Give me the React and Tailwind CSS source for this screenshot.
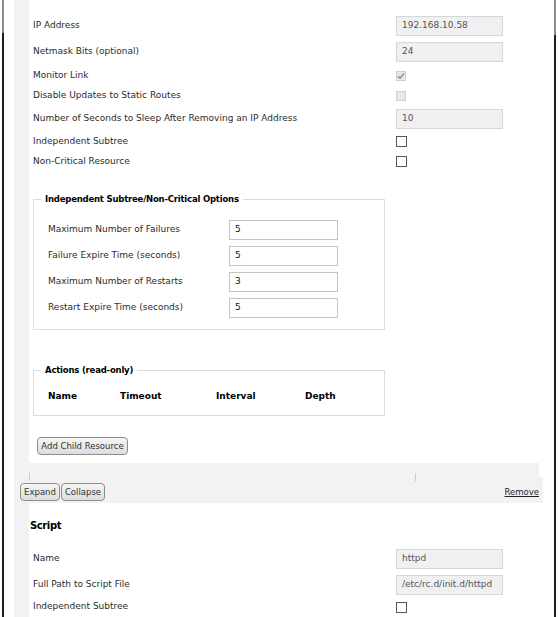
import React from "react";

const font = "font-['DejaVu_Sans',sans-serif]";

const TextBox = ({ value, disabled, className = "" }) => (
  <div
    className={`h-[20px] flex items-center px-[5px] border text-[9px] ${
      disabled
        ? "bg-[#f0f0f0] border-[#d3d8dc] text-[#555]"
        : "bg-white border-[#c4c4c4] text-[#111]"
    } ${className}`}
  >
    {value}
  </div>
);

const CheckBox = ({ checked, disabled }) => {
  if (disabled) {
    return (
      <span className="w-[10px] h-[10px] flex items-center justify-center border border-[#cfcfcf] bg-[#e9e9e9]">
        {checked && (
          <svg width="9" height="8" viewBox="0 0 9 8">
            <path d="M1 4.2 L3.4 6.6 L8 1" fill="none" stroke="#8a8a8a" strokeWidth="1.6" />
          </svg>
        )}
      </span>
    );
  }
  return <span className="w-[11px] h-[11px] border border-[#555] bg-white" />;
};

const FieldRow = ({ label, h, children }) => (
  <div className="flex items-center" style={{ height: h }}>
    <div className="w-[367px] pl-[4px] text-[9px] text-[#2b2b2b]">{label}</div>
    <div className="flex items-center">{children}</div>
  </div>
);

const OptionRow = ({ label, value }) => (
  <div className="flex items-center h-[26px]">
    <div className="w-[181px] text-[9px] text-[#2b2b2b]">{label}</div>
    <TextBox value={value} className="w-[109px]" />
  </div>
);

const Tick = ({ left }) => (
  <div className="flex">
    <div style={{ width: left }} />
    <div className="w-[1px] h-full bg-[#c8c8c8]" />
  </div>
);

const SmallButton = ({ children, className = "" }) => (
  <button
    className={`h-[18px] rounded-[4px] border border-[#8e8e8e] bg-gradient-to-b from-[#f6f6f6] to-[#dcdcdc] text-[8.5px] text-[#333] ${className}`}
  >
    {children}
  </button>
);

export default function App() {
  return (
    <div className={`w-[558px] h-[617px] overflow-hidden bg-white flex ${font}`}>
      {/* outer frame line, left */}
      <div className="w-[2px]" />
      <div className="w-[2px] flex flex-col">
        <div className="h-[33px] bg-[#8c8c8c]" />
        <div className="flex-1 bg-[#1c1c1c]" />
      </div>
      <div className="w-[10px]" />

      <div className="w-[531px] flex flex-col">
        {/* IP resource panel */}
        <div className="h-[463px] shrink-0 flex">
          <div className="w-[15px] bg-[#f2f2f2]" />
          <div className="flex-1 bg-white flex flex-col">
            <div className="pt-[13px]">
              <FieldRow label="IP Address" h={26}>
                <TextBox value="192.168.10.58" disabled className="w-[107px]" />
              </FieldRow>
              <FieldRow label="Netmask Bits (optional)" h={26}>
                <TextBox value="24" disabled className="w-[107px]" />
              </FieldRow>
              <FieldRow label="Monitor Link" h={21}>
                <CheckBox checked disabled />
              </FieldRow>
              <FieldRow label="Disable Updates to Static Routes" h={20}>
                <CheckBox disabled />
              </FieldRow>
              <FieldRow label="Number of Seconds to Sleep After Removing an IP Address" h={25}>
                <TextBox value="10" disabled className="w-[107px]" />
              </FieldRow>
              <FieldRow label="Independent Subtree" h={21}>
                <CheckBox />
              </FieldRow>
              <FieldRow label="Non-Critical Resource" h={19}>
                <CheckBox />
              </FieldRow>
            </div>

            <fieldset className="ml-[4px] mt-[22px] w-[352px] h-[137px] border border-[#dcdcdc]">
              <legend className="ml-[7px] px-[4px] text-[8.5px] tracking-[-0.2px] font-bold text-black">
                Independent Subtree/Non-Critical Options
              </legend>
              <div className="pl-[14px] pt-[11px]">
                <OptionRow label="Maximum Number of Failures" value="5" />
                <OptionRow label="Failure Expire Time (seconds)" value="5" />
                <OptionRow label="Maximum Number of Restarts" value="3" />
                <OptionRow label="Restart Expire Time (seconds)" value="5" />
              </div>
            </fieldset>

            <fieldset className="ml-[4px] mt-[34px] w-[352px] h-[52px] border border-[#dcdcdc]">
              <legend className="ml-[7px] px-[4px] text-[8.5px] tracking-[-0.2px] font-bold text-black">
                Actions (read-only)
              </legend>
              <div className="pl-[14px] flex items-center h-[40px] text-[9px] font-bold text-black">
                <div className="w-[72px]">Name</div>
                <div className="w-[96px]">Timeout</div>
                <div className="w-[89px]">Interval</div>
                <div>Depth</div>
              </div>
            </fieldset>

            <div className="mt-[16px] ml-[8px]">
              <SmallButton className="w-[91px]">Add Child Resource</SmallButton>
            </div>
          </div>
        </div>

        {/* expand / collapse bar */}
        <div className="w-[525px] h-[14px] shrink-0 bg-[#f2f2f2] flex flex-col justify-end">
          <div className="h-[4px] flex">
            <Tick left={15} />
            <Tick left={385} />
          </div>
        </div>
        <div className="w-[529px] h-[26px] shrink-0 bg-[#f2f2f2] flex flex-col">
          <div className="h-[4px] flex">
            <Tick left={15} />
            <Tick left={385} />
          </div>
          <div className="flex items-center pl-[6px] pt-[2px]">
            <SmallButton className="w-[40px]">Expand</SmallButton>
            <SmallButton className="w-[44px] ml-[1px]">Collapse</SmallButton>
            <a className="ml-auto mr-[4px] mt-[1px] text-[8.5px] text-[#222] underline">Remove</a>
          </div>
        </div>

        {/* script resource panel */}
        <div className="flex-1 flex">
          <div className="w-[15px] bg-[#f2f2f2]" />
          <div className="flex-1 bg-white">
            <div className="pl-[1px] pt-[15px] h-[44px] text-[10px] tracking-[-0.4px] font-bold text-black">
              Script
            </div>
            <FieldRow label="Name" h={24}>
              <TextBox value="httpd" disabled className="w-[107px]" />
            </FieldRow>
            <FieldRow label="Full Path to Script File" h={27}>
              <TextBox value="/etc/rc.d/init.d/httpd" disabled className="w-[107px]" />
            </FieldRow>
            <FieldRow label="Independent Subtree" h={18}>
              <CheckBox />
            </FieldRow>
          </div>
        </div>
      </div>

      {/* outer frame line, right */}
      <div className="w-[9px]" />
      <div className="w-[2px] flex flex-col">
        <div className="h-[35px] bg-[#8c8c8c]" />
        <div className="flex-1 bg-[#1c1c1c]" />
      </div>
    </div>
  );
}
